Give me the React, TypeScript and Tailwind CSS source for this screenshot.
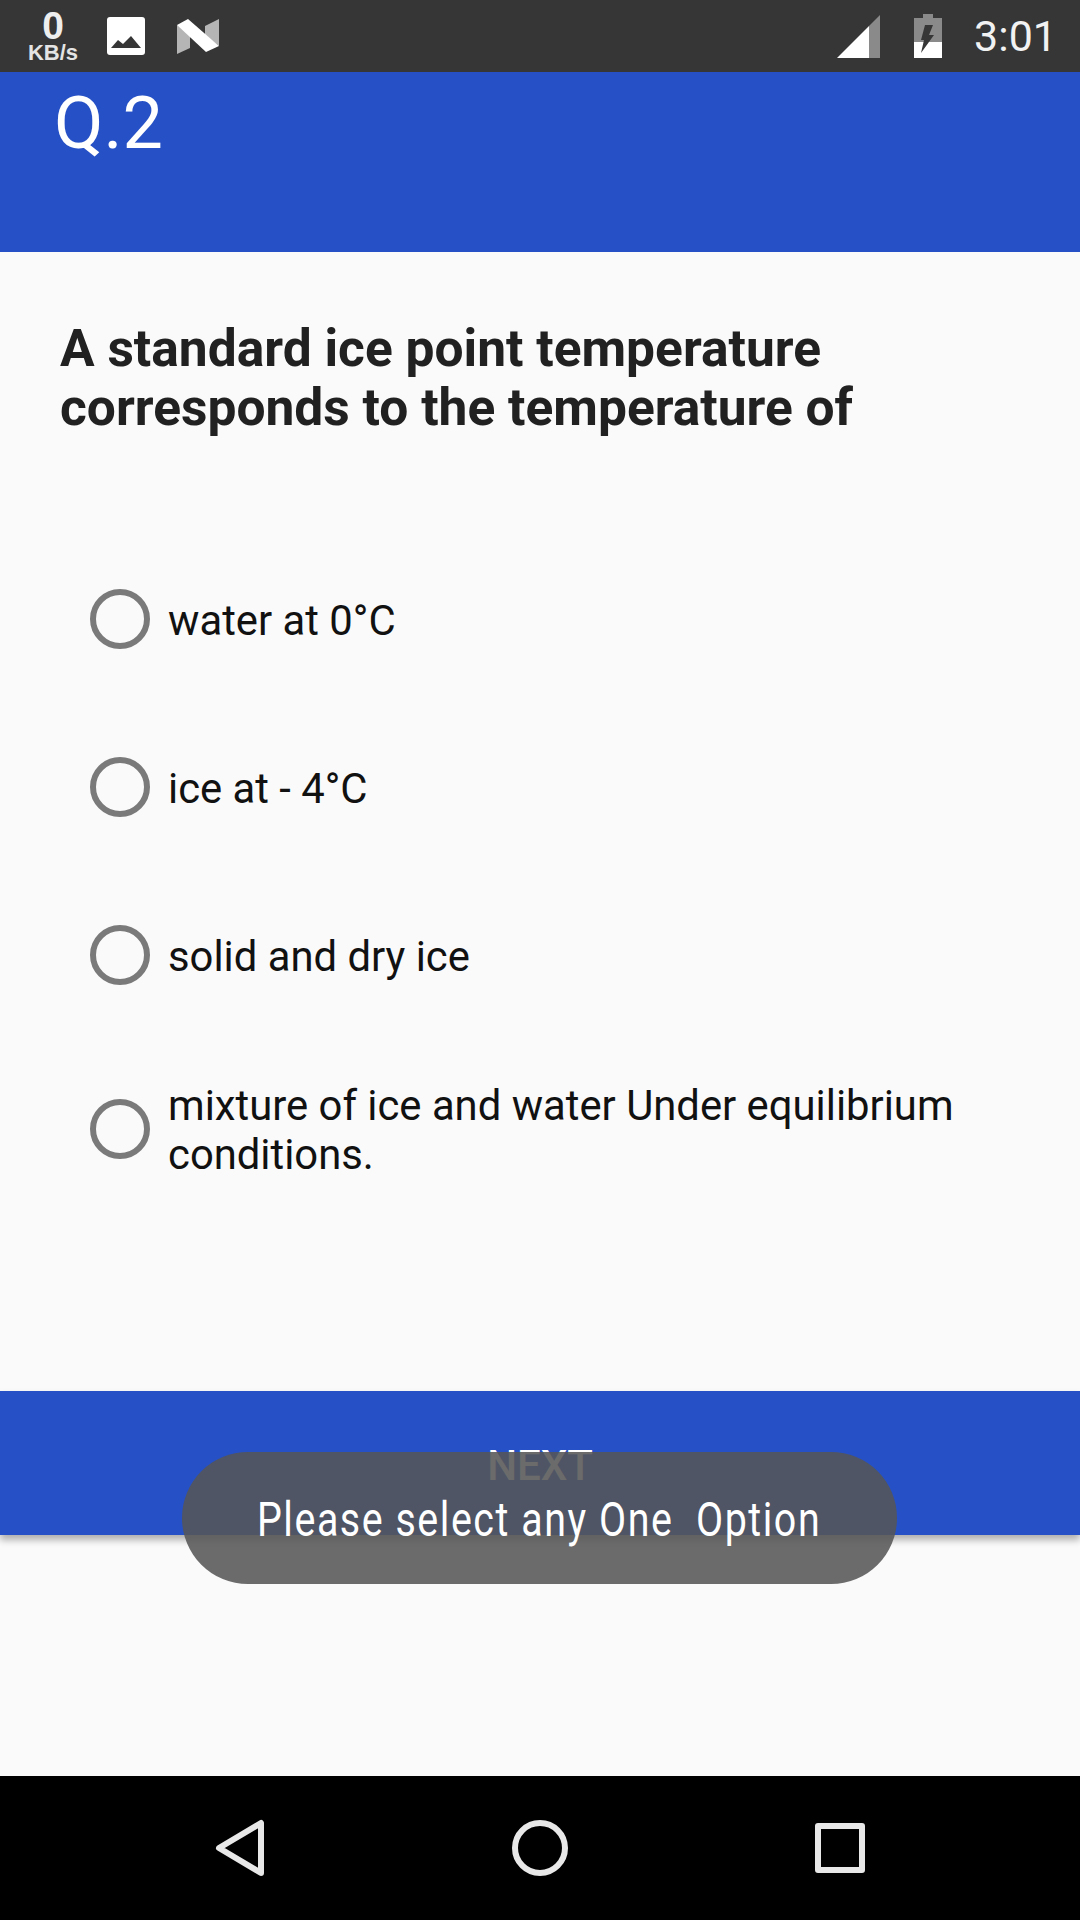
const options = ["water at 0°C", "ice at - 4°C", "solid and dry ice"];

function Radio() {
  return <span className="h-[60px] w-[60px] shrink-0 rounded-full border-[6px] border-[#7a7a7a]" />;
}

function StatusBar() {
  return (
    <div className="flex h-[72px] shrink-0 items-center bg-[#363636] pl-[27px] pr-[23px] text-white">
      <div className="flex w-[52px] flex-col items-center font-['Liberation_Sans',sans-serif] font-bold">
        <span className="text-[39px] leading-[32px] text-[#eeeeee]">0</span>
        <span className="mt-[2px] text-[22px] leading-[18px] text-[#e4e4e4]">KB/s</span>
      </div>
      <svg className="ml-[28px]" width="38" height="38" viewBox="0 0 38 38">
        <rect width="38" height="38" rx="3" fill="#fff" />
        <path d="M4 31 L11 23 L16 27 L24 19 L34 31 Z" fill="#363636" />
      </svg>
      <svg className="ml-[32px]" width="43" height="37" viewBox="0 0 43 37">
        <path d="M0 7 L13 15 L13 30 L0 36 Z" fill="#b5b5b5" />
        <path d="M28 8 L42 1 L42 28 L28 17 Z" fill="#b5b5b5" />
        <path d="M0 7 L11 1 L42 28 L29 34 Z" fill="#fff" />
      </svg>
      <svg className="ml-auto" width="43" height="43" viewBox="0 0 43 43">
        <path d="M43 0 V43 H32 V11 Z" fill="#8a8a8a" />
        <path d="M32 11 V43 H0 Z" fill="#fff" />
      </svg>
      <svg className="ml-[34px]" width="28" height="44" viewBox="0 0 28 44">
        <path d="M9 0 H19 V4 H28 V28 H0 V4 H9 Z" fill="#8a8a8a" />
        <path d="M0 28 H28 V44 H0 Z" fill="#fff" />
        <path d="M11 11 H19 L15 21 H20 L7 39 L10 26 H7 Z" fill="#363636" />
      </svg>
      <span className="ml-[32px] font-['Roboto',sans-serif] text-[43px] leading-none text-[#f2f2f2]">3:01</span>
    </div>
  );
}

function NavBar() {
  return (
    <div className="flex h-[144px] shrink-0 items-center justify-center bg-black">
      <div className="flex w-[300px] justify-center">
        <svg width="52" height="60" viewBox="0 0 52 60">
          <path d="M47 5 V55 L5 30 Z" fill="none" stroke="#e8e8e8" strokeWidth="6" strokeLinejoin="round" />
        </svg>
      </div>
      <div className="flex w-[300px] justify-center">
        <span className="h-[56px] w-[56px] rounded-full border-[6px] border-[#e8e8e8]" />
      </div>
      <div className="flex w-[300px] justify-center">
        <span className="h-[50px] w-[50px] rounded-[3px] border-[6px] border-[#e8e8e8]" />
      </div>
    </div>
  );
}

export default function App() {
  return (
    <div className="relative flex h-[1920px] w-[1080px] flex-col overflow-hidden bg-[#fafafa] font-['Roboto',sans-serif]">
      <StatusBar />
      <div className="h-[180px] shrink-0 bg-[#2651c6] pl-[54px] pt-[8px] text-[72px] leading-[88px] text-white">Q.2</div>

      <div className="flex h-[1139px] shrink-0 flex-col">
        <h1 className="mt-[67px] pl-[60px] text-[51.5px] font-bold leading-[59px] text-[#212121]">
          A standard ice point temperature
          <br />
          corresponds to the temperature of
        </h1>
        <div className="mt-[152px] flex flex-col pl-[90px]">
          {options.map((option) => (
            <div key={option} className="mb-[108px] flex h-[60px] items-center gap-[18px] text-[41.8px] leading-[49px] text-[#111111]">
              <Radio />
              <span className="pt-[3px]">{option}</span>
            </div>
          ))}
          <div className="-mt-[15px] flex items-center gap-[18px] text-[41.8px] leading-[49px] text-[#111111]">
            <Radio />
            <span className="pt-[3px]">
              mixture of ice and water Under equilibrium
              <br />
              conditions.
            </span>
          </div>
        </div>
      </div>

      <div className="flex h-[144px] shrink-0 items-start justify-center bg-[#2651c6] pt-[50px] text-[42px] font-medium leading-[49px] text-white shadow-[0_5px_7px_rgba(0,0,0,0.3)]">
        NEXT
      </div>
      <div className="flex-1" />
      <NavBar />

      <div className="absolute left-[182px] top-[1452px] flex h-[132px] w-[715px] items-center justify-center rounded-[66px] bg-[#565656]/[0.873]">
        <span className="scale-x-[0.82] whitespace-pre pt-[3px] text-[48px] leading-[56px] tracking-[1.9px] text-white">Please select any One  Option</span>
      </div>
    </div>
  );
}
